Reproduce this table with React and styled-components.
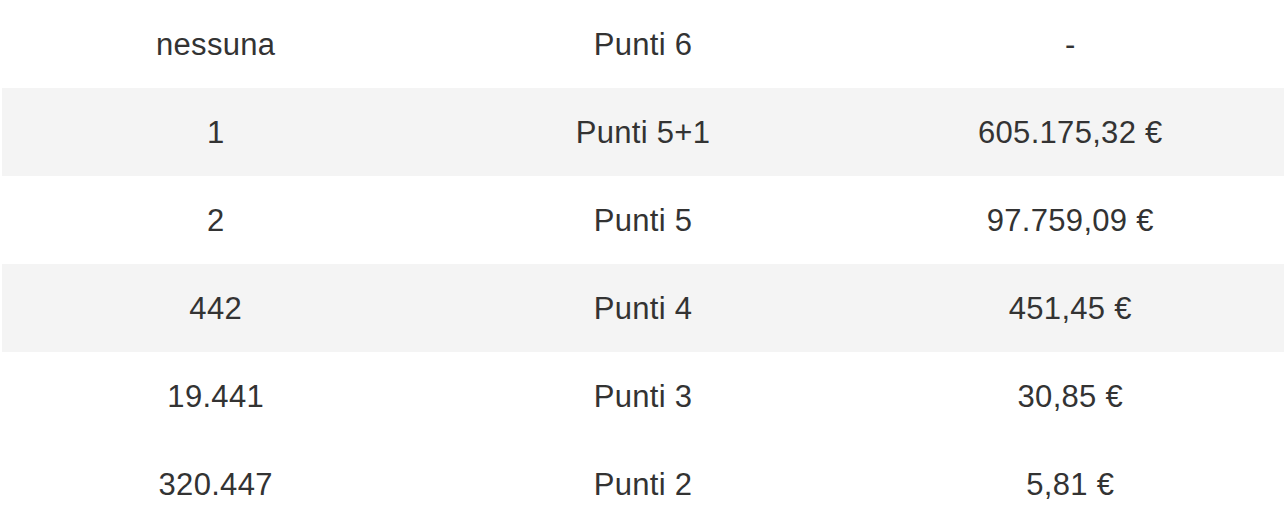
import React from 'react';
import styled, { createGlobalStyle } from 'styled-components';

const rows = [
  { winners: 'nessuna', category: 'Punti 6', prize: '-' },
  { winners: '1', category: 'Punti 5+1', prize: '605.175,32 €', shaded: true },
  { winners: '2', category: 'Punti 5', prize: '97.759,09 €' },
  { winners: '442', category: 'Punti 4', prize: '451,45 €', shaded: true },
  { winners: '19.441', category: 'Punti 3', prize: '30,85 €' },
  { winners: '320.447', category: 'Punti 2', prize: '5,81 €' },
];

const App = () => (
  <>
    <GlobalStyle />
    <Page>
      <Table>
        <tbody>
          {rows.map((row) => (
            <Row key={row.category} shaded={row.shaded}>
              <Cell>{row.winners}</Cell>
              <Cell>{row.category}</Cell>
              <Cell>{row.prize}</Cell>
            </Row>
          ))}
        </tbody>
      </Table>
    </Page>
  </>
);

export default App;

const GlobalStyle = createGlobalStyle`
  html, body {
    margin: 0;
    padding: 0;
    background: #ffffff;
  }
`;

const Page = styled.div`
  padding: 0 2px;
  font-family: 'Liberation Sans', Arial, sans-serif;
  color: #333333;
`;

const Table = styled.table`
  width: 100%;
  border-collapse: collapse;
  table-layout: fixed;
`;

const Row = styled.tr.withConfig({ shouldForwardProp: (p) => p !== 'shaded' })`
  height: 88px;
  background: ${(p) => (p.shaded ? '#f4f4f4' : 'transparent')};
`;

const Cell = styled.td`
  padding: 0;
  text-align: center;
  vertical-align: middle;
  font-size: 31px;
  letter-spacing: 0.3px;
  line-height: 1;
`;
